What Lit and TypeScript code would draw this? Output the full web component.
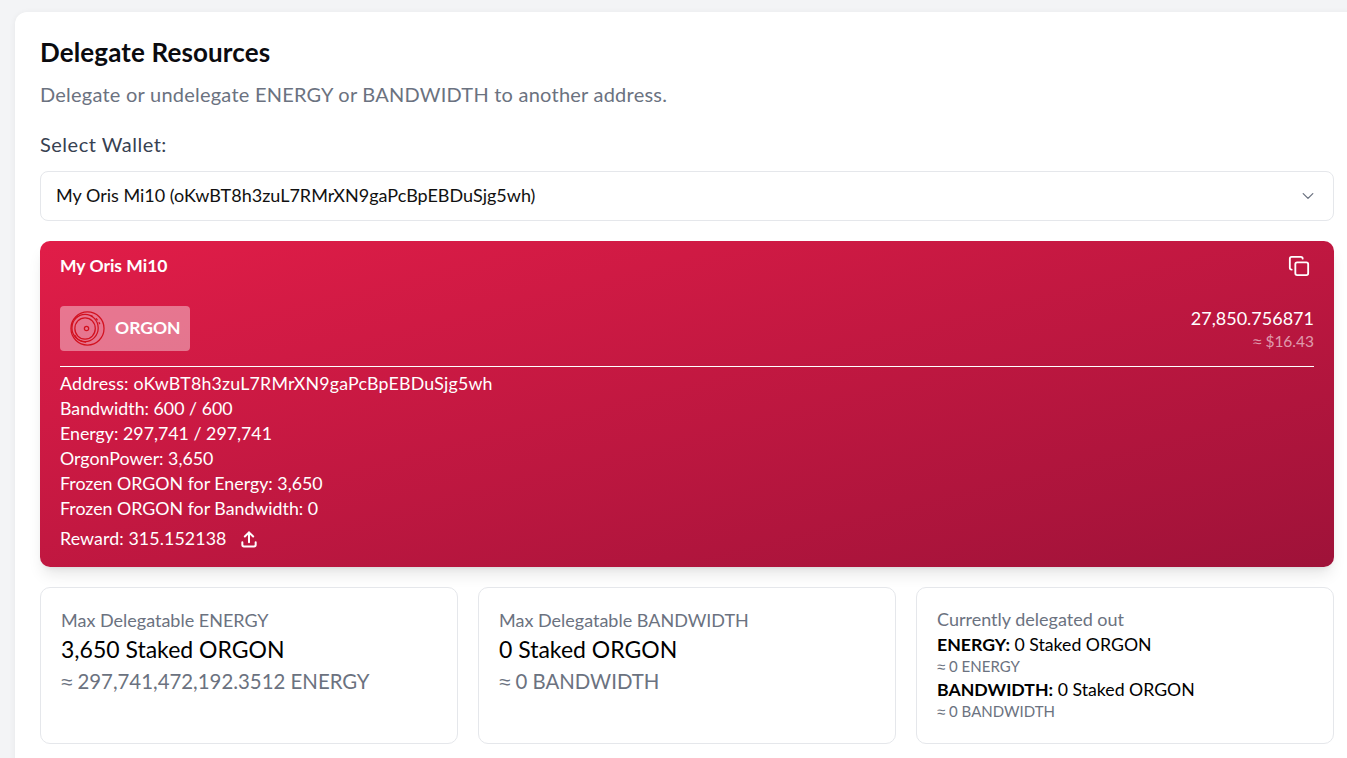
import { LitElement, html, css } from "lit";
import { customElement } from "lit/decorators.js";

@customElement("app-root")
export class AppRoot extends LitElement {
  static styles = css`
    :host { display: block; width: 1347px; height: 758px; overflow: hidden; background: #f3f4f6; font-family: "Lato", "Noto Sans", sans-serif; color: #000; box-sizing: border-box; padding: 12px 0 0 15px; }
    * { box-sizing: border-box; }
    .page { width: 1344px; height: 780px; background: #fff; border-radius: 12px; padding: 24px 25px 25px; box-shadow: 0 1px 6px rgba(0,0,0,.06); }
    h1 { margin: 0; font-size: 26px; line-height: 32px; font-weight: 700; letter-spacing: .12px; color: #0b0b0f; }
    .sub { margin: 12px 0 0; font-size: 20px; line-height: 28px; letter-spacing: .23px; color: #6b7280; }
    .label { margin-top: 22px; font-size: 20px; line-height: 28px; letter-spacing: .5px; color: #374151; }
    .select { margin-top: 13px; height: 50px; border: 1px solid #e5e7eb; border-radius: 8px; display: flex; align-items: center; justify-content: space-between; padding: 0 17px 2px 15px; font-size: 18px; color: #111; }
    .select svg { width: 16px; height: 16px; color: #6b7280; margin-top: 2px; }
    .wallet { margin-top: 20px; height: 326px; border-radius: 10px; padding: 13px 20px 0; color: #fff; background: linear-gradient(to bottom right, #e11d48 0%, #9f1239 100%); box-shadow: 0 10px 15px -3px rgba(0,0,0,.1), 0 4px 6px -4px rgba(0,0,0,.1); }
    .w-head { display: flex; justify-content: space-between; align-items: center; height: 22px; font-size: 17.5px; font-weight: 700; }
    .w-head svg { width: 22px; height: 22px; margin-right: 4px; margin-top: 2px; }
    .w-token { margin-top: 30px; display: flex; justify-content: space-between; align-items: center; padding-bottom: 15px; border-bottom: 1px solid #fff; }
    .chip { width: 130px; height: 45px; border-radius: 4px; background: rgba(255,255,255,.4); display: flex; align-items: center; gap: 10px; padding-left: 10px; font-size: 17.5px; font-weight: 700; }
    .chip span { padding-bottom: 2px; }
    .chip svg { width: 35px; height: 35px; }
    .amt { text-align: right; font-size: 18px; line-height: 22px; }
    .usd { font-size: 15.5px; line-height: 20px; margin-top: 2px; color: rgba(255,255,255,.58); }
    .ap { font-family: "Noto Sans", sans-serif; }
    .rows { margin-top: 4px; font-size: 17.8px; line-height: 25px; }
    .addr { letter-spacing: .2px; }
    .reward { display: flex; align-items: center; gap: 13px; height: 35px; letter-spacing: .1px; }
    .reward svg { width: 20px; height: 20px; margin-top: 1px; }
    .cards { margin-top: 20px; display: grid; grid-template-columns: repeat(3, 1fr); gap: 20px; }
    .card { height: 157px; border: 1px solid #e5e7eb; border-radius: 10px; padding: 20px; }
    .t { font-size: 18px; line-height: 24px; color: #6b7280; }
    .v { font-size: 23px; line-height: 28px; margin-top: 3px; }
    .e { font-size: 20.4px; line-height: 28px; color: #6b7280; margin-top: 4px; }
    .t3 { margin-top: -1px; }
    .m { font-size: 17.7px; line-height: 24px; margin-top: 2px; }
    .m b { font-weight: 700; }
    .s { font-size: 15px; line-height: 19px; color: #6b7280; }
  `;

  render() {
    const ap = html`<span class="ap">≈</span>`;
    return html`<div class="page">
      <h1>Delegate Resources</h1>
      <p class="sub">Delegate or undelegate ENERGY or BANDWIDTH to another address.</p>
      <div class="label">Select Wallet:</div>
      <div class="select"><span>My Oris Mi10 (oKwBT8h3zuL7RMrXN9gaPcBpEBDuSjg5wh)</span>
        <svg viewBox="0 0 20 20" fill="none" stroke="currentColor" stroke-width="1.6" stroke-linecap="round" stroke-linejoin="round"><path d="M4 7l6 6 6-6"/></svg></div>
      <div class="wallet">
        <div class="w-head"><span>My Oris Mi10</span>
          <svg viewBox="0 0 24 24" fill="none" stroke="currentColor" stroke-width="2" stroke-linecap="round" stroke-linejoin="round"><rect x="8" y="8" width="14" height="14" rx="2"/><path d="M4 16c-1.1 0-2-.9-2-2V4c0-1.1.9-2 2-2h10c1.1 0 2 .9 2 2"/></svg></div>
        <div class="w-token">
          <div class="chip"><svg viewBox="0 0 36 36" fill="none" stroke="#d2111f" stroke-width="1.3" stroke-linecap="round">
            <circle cx="18" cy="18" r="17"/><ellipse cx="15.5" cy="17.5" rx="13.5" ry="14"/><ellipse cx="15.5" cy="18" rx="10.5" ry="11"/><circle cx="17" cy="18" r="2.2"/>
            <path d="M5 25c2 4 6 6.5 11 7M22 5l1 .5M27 8l1 1M30 12l.5 1"/></svg><span>ORGON</span></div>
          <div class="amt"><div>27,850.756871</div><div class="usd">${ap} $16.43</div></div>
        </div>
        <div class="rows">
          <div class="addr">Address: oKwBT8h3zuL7RMrXN9gaPcBpEBDuSjg5wh</div>
          <div>Bandwidth: 600 / 600</div>
          <div>Energy: 297,741 / 297,741</div>
          <div>OrgonPower: 3,650</div>
          <div>Frozen ORGON for Energy: 3,650</div>
          <div>Frozen ORGON for Bandwidth: 0</div>
          <div class="reward"><span>Reward: 315.152138</span>
            <svg viewBox="0 0 24 24" fill="none" stroke="currentColor" stroke-width="2.4" stroke-linecap="round" stroke-linejoin="round"><path d="M12 16V4M7 9l5-5 5 5M4 16v3a2 2 0 0 0 2 2h12a2 2 0 0 0 2-2v-3"/></svg></div>
        </div>
      </div>
      <div class="cards">
        <div class="card"><div class="t">Max Delegatable ENERGY</div><div class="v">3,650 Staked ORGON</div><div class="e">${ap} 297,741,472,192.3512 ENERGY</div></div>
        <div class="card"><div class="t">Max Delegatable BANDWIDTH</div><div class="v">0 Staked ORGON</div><div class="e">${ap} 0 BANDWIDTH</div></div>
        <div class="card"><div class="t t3">Currently delegated out</div>
          <div class="m"><b>ENERGY:</b> 0 Staked ORGON</div><div class="s">${ap} 0 ENERGY</div>
          <div class="m"><b>BANDWIDTH:</b> 0 Staked ORGON</div><div class="s">${ap} 0 BANDWIDTH</div></div>
      </div>
    </div>`;
  }
}
